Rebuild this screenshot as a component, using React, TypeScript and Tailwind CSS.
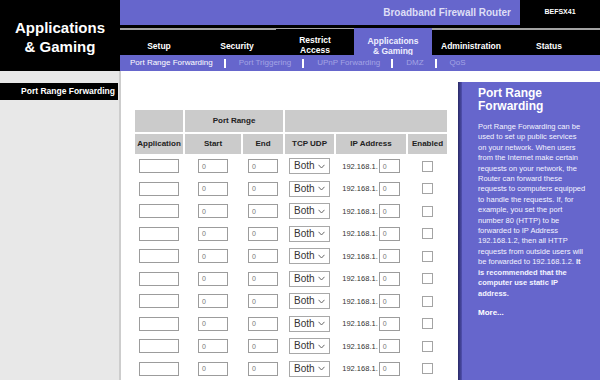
import React from "react";

const tabs = [
  { label: ["Setup"] },
  { label: ["Security"] },
  { label: ["Restrict", "Access"] },
  { label: ["Applications", "& Gaming"], active: true },
  { label: ["Administration"] },
  { label: ["Status"] },
];

const subnav = [
  { t: "Port Range Forwarding", active: true },
  { t: "Port Triggering" },
  { t: "UPnP Forwarding" },
  { t: "DMZ" },
  { t: "QoS" },
];

const helpLines: { t: React.ReactNode; b?: boolean }[] = [
  { t: "Port Range Forwarding can be" },
  { t: "used to set up public services" },
  { t: "on your network. When users" },
  { t: "from the Internet make certain" },
  { t: "requests on your network, the" },
  { t: "Router can forward these" },
  { t: "requests to computers equipped" },
  { t: "to handle the requests. If, for" },
  { t: "example, you set the port" },
  { t: "number 80 (HTTP) to be" },
  { t: "forwarded to IP Address" },
  { t: "192.168.1.2, then all HTTP" },
  { t: "requests from outside users will" },
  {
    t: (
      <>
        be forwarded to 192.168.1.2. <span className="font-bold">It</span>
      </>
    ),
  },
  { t: "is recommended that the", b: true },
  { t: "computer use static IP", b: true },
  { t: "address.", b: true },
];

const cols = "grid grid-cols-[48px_56px_40px_49px_70px_39px] gap-x-[2px]";

function Field({ w, v }: { w: string; v?: string }) {
  return (
    <div
      className={`${w} h-[14px] border border-[#9c9c9c] bg-white pl-[3px] flex items-center text-[7px] leading-none text-[#777]`}
    >
      {v ?? ""}
    </div>
  );
}

function Row() {
  return (
    <div className={`${cols} h-[22.5px] items-center`}>
      <div className="flex justify-center">
        <Field w="w-[40px]" />
      </div>
      <div className="flex justify-center">
        <Field w="w-[30px]" v="0" />
      </div>
      <div className="flex justify-center">
        <Field w="w-[30px]" v="0" />
      </div>
      <div className="flex justify-center">
        <div className="w-[41px] h-[16px] border border-[#a8a8a8] bg-white flex items-center justify-between pl-[4px] pr-[4px]">
          <span className="text-[10px] text-[#333] leading-none">Both</span>
          <svg width="7" height="5" viewBox="0 0 7 5">
            <polyline points="0.5,0.8 3.5,4 6.5,0.8" fill="none" stroke="#666" strokeWidth="1" />
          </svg>
        </div>
      </div>
      <div className="flex justify-center items-center">
        <span className="text-[7.5px] text-[#333] mr-[1px]">192.168.1.</span>
        <Field w="w-[21px]" v="0" />
      </div>
      <div className="flex justify-center">
        <div className="w-[11px] h-[11px] border border-[#a4a4a4] bg-white" />
      </div>
    </div>
  );
}

export default function App() {
  return (
    <div className="w-[600px] h-[380px] overflow-hidden bg-white flex flex-col font-['Liberation_Sans',Arial,sans-serif]">
      {/* Header */}
      <div className="flex h-[71px]">
        <div className="w-[120px] bg-black flex items-center justify-center pt-[2px] text-white font-bold text-[15px] leading-[19px] text-center">
          Applications
          <br />& Gaming
        </div>
        <div className="flex-1 flex flex-col">
          <div className="h-[25px] flex bg-[#6666cc]">
            <div className="flex-1 flex items-center justify-end pr-[9px] text-[10px] font-bold text-[#dedef6]">
              Broadband Firewall Router
            </div>
            <div className="w-[80px] bg-black flex items-center justify-center text-white text-[7px] font-bold">
              BEFSX41
            </div>
          </div>
          <div className="h-[30px] bg-black pt-[3px] flex">
            {tabs.map((tb, i) =>
              tb.active ? (
                <div
                  key={i}
                  className="w-[78px] bg-[#6666cc] flex items-center justify-center pt-[8px] text-[#eeeeff] text-[8.5px] font-bold leading-[10px] text-center"
                >
                  <div>
                    {tb.label.map((l, j) => (
                      <div key={j}>{l}</div>
                    ))}
                  </div>
                </div>
              ) : (
                <div key={i} className="w-[78px] flex flex-col">
                  <div className="h-[2px] bg-[#a3a3a3]" />
                  <div className="flex-1 flex items-center justify-center pt-[6px] text-white text-[8.5px] font-bold leading-[10px] text-center">
                    <div>
                      {tb.label.map((l, j) => (
                        <div key={j}>{l}</div>
                      ))}
                    </div>
                  </div>
                </div>
              )
            )}
            <div className="flex-1 flex flex-col">
              <div className="h-[2px] bg-[#a3a3a3]" />
            </div>
          </div>
          <div className="h-[16px] bg-[#6666cc] flex items-center pl-[10px] gap-x-[11px]">
            {subnav.map((s, i) => (
              <React.Fragment key={i}>
                {i > 0 && <div className="w-[2px] h-[9px] bg-white" />}
                <span
                  className={`text-[8px] leading-none ${
                    s.active ? "text-white" : "text-[#a4a4e4]"
                  } ${i > 0 ? "ml-[2px]" : ""}`}
                >
                  {s.t}
                </span>
              </React.Fragment>
            ))}
          </div>
        </div>
      </div>

      {/* Body */}
      <div className="flex flex-1">
        <div className="w-[121px] bg-[#e8e8e8] border-r-2 border-[#cdcdcd] pt-[12px]">
          <div className="h-[17px] w-[118px] bg-black flex items-center justify-end pr-[3px] text-white text-[8.5px] font-bold">
            Port Range Forwarding
          </div>
        </div>

        <div className="flex-1 bg-white pl-[14px] pt-[39px]">
          <div className="flex flex-col w-[312px]">
            <div className={`${cols} gap-y-[2px]`}>
              <div className="h-[22px] bg-[#cbcbcb]" />
              <div className="col-span-2 h-[22px] bg-[#cbcbcb] flex items-center justify-center text-[8px] font-bold text-[#222]">
                Port Range
              </div>
              <div className="col-span-3 h-[22px] bg-[#cbcbcb]" />
              {["Application", "Start", "End", "TCP UDP", "IP Address", "Enabled"].map((h) => (
                <div
                  key={h}
                  className="h-[20px] bg-[#cbcbcb] flex items-center justify-center text-[8px] font-bold text-[#222] whitespace-nowrap"
                >
                  {h}
                </div>
              ))}
            </div>
            <div className="pt-[1px]">
              {Array.from({ length: 10 }).map((_, i) => (
                <Row key={i} />
              ))}
            </div>
          </div>
        </div>

        <div className="w-[142px] mt-[11px] bg-[#6666cc] flex">
          <div className="w-[4px] bg-linear-to-r from-[#2a2a66] to-[#5050b0]" />
          <div className="flex-1 pl-[16px] pt-[5px] text-white">
            <div className="text-[12px] leading-[13px] font-bold">
              Port Range
              <br />
              Forwarding
            </div>
            <div className="mt-[9px] text-[7.5px] leading-[10.4px] text-[#f4f4ff]">
              {helpLines.map((l, i) => (
                <div key={i} className={`whitespace-nowrap ${l.b ? "font-bold" : ""}`}>
                  {l.t}
                </div>
              ))}
            </div>
            <div className="mt-[9px] text-[8px] leading-[10px] font-bold">More...</div>
          </div>
        </div>
      </div>
    </div>
  );
}
